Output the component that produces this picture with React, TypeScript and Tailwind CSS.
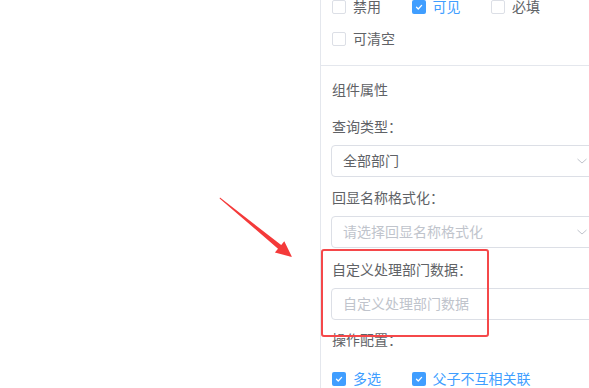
import React from "react";

const font = { fontFamily: '"Liberation Sans", "Noto Sans CJK SC", sans-serif' };

function Box({ checked }: { checked?: boolean }) {
  return checked ? (
    <span className="flex h-[14px] w-[14px] shrink-0 items-center justify-center rounded-[2px] bg-[#409eff]">
      <svg width="10" height="10" viewBox="0 0 10 10">
        <path d="M2.5 5.2 L4.3 7 L7.6 3.4" fill="none" stroke="#fff" strokeWidth="1.3" strokeLinecap="round" strokeLinejoin="round" />
      </svg>
    </span>
  ) : (
    <span className="h-[14px] w-[14px] shrink-0 rounded-[2px] border border-[#dcdfe6] bg-white" />
  );
}

function Check({ label, checked }: { label: string; checked?: boolean }) {
  return (
    <div className="flex w-[79.5px] shrink-0 items-center gap-[7px]">
      <Box checked={checked} />
      <span className={`text-[14px] leading-[20px] ${checked ? "text-[#409eff]" : "text-[#606266]"}`}>{label}</span>
    </div>
  );
}

function Chevron() {
  return (
    <svg width="12" height="12" viewBox="0 0 12 12" className="shrink-0">
      <path d="M1.5 4 L6 8 L10.5 4" fill="none" stroke="#c0c4cc" strokeWidth="1" />
    </svg>
  );
}

function Field({ text, placeholder, chevron }: { text: string; placeholder?: boolean; chevron?: boolean }) {
  return (
    <div className="flex h-[32px] w-[272px] shrink-0 items-center justify-between rounded-[4px] border border-[#dcdfe6] bg-white pl-[11px] pr-[14px]">
      <span className={`text-[14px] leading-[20px] ${placeholder ? "text-[#c0c4cc]" : "text-[#606266]"}`}>{text}</span>
      {chevron && <Chevron />}
    </div>
  );
}

function Label({ text }: { text: string }) {
  return <div className="text-[14px] leading-[20px] text-[#606266]">{text}</div>;
}

export default function App() {
  return (
    <div className="relative flex h-[388px] w-[589px] overflow-hidden bg-white" style={font}>
      <div className="w-[320px] shrink-0" />
      <div className="flex min-w-0 flex-1 flex-col overflow-hidden border-l border-[#e4e7ed]">
        <div className="-mt-[9px] flex flex-col pl-[11px]">
          <div className="flex h-[32px] items-center">
            <Check label="禁用" />
            <Check label="可见" checked />
            <Check label="必填" />
          </div>
          <div className="flex h-[32px] items-center">
            <Check label="可清空" />
          </div>
        </div>
        <div className="mt-[10px] h-px w-full shrink-0 bg-[#e4e7ed]" />
        <div className="flex flex-col pl-[10px]">
          <div className="mt-[14px] pl-[1px]"><Label text="组件属性" /></div>
          <div className="mt-[17px] pl-[1px]"><Label text="查询类型：" /></div>
          <div className="mt-[8px]"><Field text="全部部门" chevron /></div>
          <div className="mt-[11px] pl-[1px]"><Label text="回显名称格式化：" /></div>
          <div className="mt-[8px]"><Field text="请选择回显名称格式化" placeholder chevron /></div>
          <div className="mt-[12px] pl-[1px]"><Label text="自定义处理部门数据：" /></div>
          <div className="mt-[8px]"><Field text="自定义处理部门数据" placeholder /></div>
          <div className="mt-[10px] pl-[1px]"><Label text="操作配置：" /></div>
          <div className="mt-[19px] flex items-center pl-[1px]">
            <Check label="多选" checked />
            <div className="flex items-center gap-[7px]">
              <Box checked />
              <span className="whitespace-nowrap text-[14px] leading-[20px] text-[#409eff]">父子不互相关联</span>
            </div>
          </div>
        </div>
      </div>

      {/* annotation: red highlight box */}
      <div className="pointer-events-none absolute left-[321px] top-[249px] h-[88px] w-[168px] rounded-[3px] border-2 border-[#f5484a]" />

      {/* annotation: red arrow */}
      <svg className="pointer-events-none absolute left-0 top-0" width="589" height="388" viewBox="0 0 589 388">
        <polygon
          points="220,197.6 281.2,245 284.3,241.2 292,257 274.9,252.6 278,248.8 219.6,198.4"
          fill="#f43a3a"
        />
      </svg>
    </div>
  );
}
